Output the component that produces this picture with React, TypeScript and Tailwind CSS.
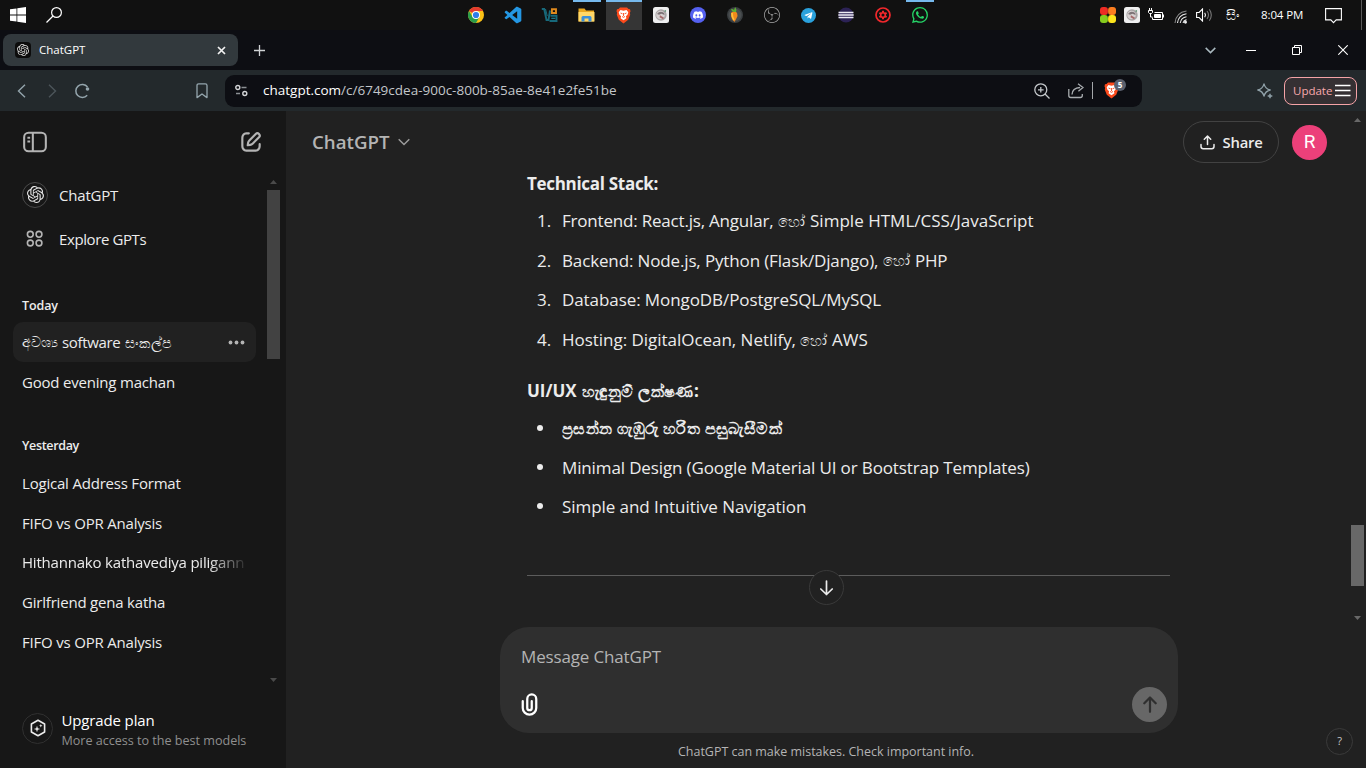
import React from "react";
import { SiOpenai, SiObsstudio, SiDiscord, SiWhatsapp } from "react-icons/si";
import { FaTelegramPlane } from "react-icons/fa";
import { BiLogoVisualStudio } from "react-icons/bi";

function Chrome() {
  return (
    <svg width="16" height="16" viewBox="0 0 48 48">
      <circle cx="24" cy="24" r="24" fill="#fbc116" />
      <path d="M24 24 L3.2 12 A24 24 0 0 1 44.8 12 L24 12Z" fill="#e33b2e" />
      <path d="M3.2 12 L13.6 30 L24 36 L24 48 A24 24 0 0 1 3.2 12Z" fill="#2a9d4a" />
      <path d="M24 48 L34.4 30 L24 34 L13.6 30Z" fill="#2a9d4a" />
      <circle cx="24" cy="24" r="12" fill="#fff" />
      <circle cx="24" cy="24" r="9.3" fill="#2f7de8" />
    </svg>
  );
}

function VBox() {
  return (
    <svg width="17" height="16" viewBox="0 0 17 16" fill="none">
      <path d="M.8 2h2.400l2.300 11h2L9 3.500" stroke="#17697a" strokeWidth="1.900" />
      <path d="M4.500 2l1.800 7" stroke="#1d8296" strokeWidth=".8" />
      <path d="M9.500 8.700h6v5.300h-7" stroke="#17697a" strokeWidth="1.900" />
      <path d="M10.300 11.300h4" stroke="#1d8296" strokeWidth="1.200" />
      <path d="M10.900 6V2.300h4.100v3.700z" stroke="#e08a1e" strokeWidth="1.900" />
    </svg>
  );
}

function Folder() {
  return (
    <svg width="17" height="16" viewBox="0 0 17 16">
      <path d="M0.5 1.5h6l1.500 2h8v11h-15.500z" fill="#e9a820" />
      <path d="M0.500 5h16v9.500h-16z" fill="#ffd767" />
      <path d="M3.500 14.500v-4q0-1.500 1.500-1.500h7q1.500 0 1.500 1.500v4h-3v-3h-4v3z" fill="#3a8fd8" />
    </svg>
  );
}

function BraveLion() {
  return (
    <svg width="15" height="17" viewBox="0 0 15 17">
      <path d="M4 .5h7l1.500 1.500 1.500.3.500 2-.6 1.500.3 2-2 5L7.500 16.500 2.800 12.800l-2-5 .3-2L.5 4.300l.5-2L2.500 2z" fill="#fb4a1c" />
      <path d="M4.500 3l3 .7 3-.7 1.800 2.200-.8 2.500-1.600 1.500.5 2-2.900 2-2.900-2 .5-2L3.500 7.700 2.700 5.200z" fill="#fff" />
      <path d="M4.500 6l2 .8M10.500 6l-2 .8M7.500 6v3M6 9.500l1.500.8L9 9.500" stroke="#fb4a1c" strokeWidth=".9" fill="none" />
    </svg>
  );
}

function Cat() {
  return (
    <svg width="16" height="16" viewBox="0 0 16 16">
      <rect width="16" height="16" rx="2.500" fill="#efefef" />
      <circle cx="8" cy="8" r="5.700" fill="#a9a6a6" />
      <circle cx="7.500" cy="8" r="4.300" fill="#d6d0d0" />
      <path d="M4 7q3-4 7-1l.5 2-3-1.300-2.500 1z" fill="#7d7476" />
      <path d="M7 8.300l4 2.500-1 1.500-3.500-2z" fill="#a56a6a" />
      <circle cx="12.300" cy="4" r=".9" fill="#6f9a80" />
    </svg>
  );
}

function FruityLoops() {
  return (
    <svg width="16" height="16" viewBox="0 0 16 16">
      <circle cx="8" cy="8" r="8" fill="#3a3e40" />
      <circle cx="8" cy="8" r="6.500" fill="#4a4e50" />
      <path d="M4.300 5.500q2.500-2 5.700.3 1.300 3-.6 5.600L7.500 15q-2.900-2.500-3.500-6 0-2.500.3-3.500z" fill="#f28a1c" />
      <path d="M5 6q0 4.500 2 7" stroke="#ffc23e" strokeWidth="1.700" fill="none" />
      <path d="M7 5q-2.500-.7-3-3 2 0 3.200 1.400Q7 1.500 8.500.300q1.200 2.200.5 4.700z" fill="#5cb531" />
    </svg>
  );
}

function Eclipse() {
  return (
    <svg width="16" height="16" viewBox="0 0 16 16">
      <circle cx="8" cy="8" r="7.500" fill="#2c2255" />
      <path d="M.5 5.500h15M.3 8h15.400M.5 10.500h15" stroke="#eceaf5" strokeWidth="1.300" />
    </svg>
  );
}

function RedCog() {
  return (
    <svg width="16" height="16" viewBox="0 0 16 16" fill="none" stroke="#f3282c">
      <circle cx="8" cy="8" r="7" strokeWidth="1.700" />
      <path d="M8 3.800v2M8 10.200v2M4.400 5.900l1.700 1M9.900 9.100l1.700 1M4.400 10.100l1.700-1M9.900 6.900l1.700-1" strokeWidth="2" />
      <circle cx="8" cy="8" r="2.300" strokeWidth="1.600" />
    </svg>
  );
}

type AppCell = { icon: React.ReactNode; open?: boolean; active?: boolean };

const apps: AppCell[] = [
  { icon: <Chrome /> },
  { icon: <BiLogoVisualStudio size={20} color="#2497e3" /> },
  { icon: <VBox /> },
  { icon: <Folder />, open: true },
  { icon: <BraveLion />, active: true },
  { icon: <Cat /> },
  { icon: <span className="flex size-4 items-center justify-center rounded-full bg-[#5561f0]"><SiDiscord size={10} color="#fff" /></span> },
  { icon: <FruityLoops /> },
  { icon: <SiObsstudio size={16} color="#a9a9a9" /> },
  { icon: <span className="flex size-[15px] items-center justify-center rounded-full bg-[#2aa1dc]"><FaTelegramPlane size={9} color="#fff" /></span> },
  { icon: <Eclipse /> },
  { icon: <RedCog /> },
  { icon: <SiWhatsapp size={16} color="#25d366" />, open: true },
];

function Taskbar() {
  return (
    <div className="flex h-[30px] items-center bg-[#111111] text-white">
      <svg className="ml-[10px]" width="16" height="16" viewBox="0 0 16 16" fill="#fff">
        <path d="M0 2.300 6.500 1.400V7.500H0zM7.300 1.300 16 0v7.500H7.300zM0 8.400h6.500v6.200L0 13.700zM7.300 8.400H16V16l-8.700-1.300z" />
      </svg>
      <svg className="ml-5" width="16" height="16" viewBox="0 0 16 16" fill="none" stroke="#fff" strokeWidth="1.200">
        <circle cx="10.500" cy="5.500" r="4.900" />
        <path d="M7 9 .5 15.500" />
      </svg>
      <div className="ml-[395px] flex h-full">
        {apps.map((a, i) => (
          <div key={i} className="flex h-full w-[37px] justify-center">
            <div className={a.active ? "flex h-full w-9 flex-col items-center bg-[#353535]" : "flex h-full w-7 flex-col items-center"}>
              <div className={a.active || a.open ? "h-[2px] w-full bg-[#76b9ed]" : "h-[2px] w-full"} />
              <div className="flex h-[26px] items-center">{a.icon}</div>
            </div>
          </div>
        ))}
      </div>
      <div className="ml-[162px] flex h-full items-center">
        <svg width="16" height="16" viewBox="0 0 16 16">
          <rect width="7.900" height="7.900" rx="3" fill="#ee2b24" />
          <rect x="8.100" width="7.900" height="7.900" rx="3" fill="#fb7d1f" />
          <rect y="8.100" width="7.900" height="7.900" rx="3" fill="#86cc1d" />
          <rect x="8.100" y="8.100" width="7.900" height="7.900" rx="3" fill="#fde51c" />
        </svg>
        <span className="ml-2"><Cat /></span>
        <svg className="ml-2" width="16" height="14" viewBox="0 0 16 14" fill="none" stroke="#fff">
          <path d="M4.500 9.500v2h10v-7h-8" />
          <path d="M6.500 6.500h6v3h-6z" fill="#fff" />
          <path d="M15.500 6.500v3M1.500 0v2.500M3.500 0v2.500M.5 2.500h4v2l-1 1h-2l-1-1zM2.500 5.500v3.500h2" />
        </svg>
        <svg className="ml-[10px] mt-[3px]" width="16" height="14" viewBox="0 0 16 14" fill="none" stroke="#e8e8e8" strokeWidth="1.100">
          <path d="M1 13Q2 2.500 12.500 1" stroke="#8a8a8a" />
          <path d="M3.500 13Q4.500 5 12.500 3.800M6.200 13q1-5.500 6.300-6.300M9 13q.5-2.500 3.500-3.400" />
          <circle cx="11.500" cy="12.200" r=".9" fill="#fff" />
        </svg>
        <svg className="ml-[6px]" width="17" height="14" viewBox="0 0 17 14" fill="none" stroke="#fff" strokeWidth="1.100">
          <path d="M.6 4.500h2.500L6.500 1v12L3.100 9.500H.6z" />
          <path d="M8.700 4.800q1.600 2.200 0 4.400" />
          <path d="M11 3q3 4 0 8M13.300 1.200q4 5.800 0 11.600" stroke="#777" />
        </svg>
        <span className="ml-[13px] w-[15px] whitespace-nowrap text-[13.500px]">සිං</span>
        <span className="ml-5 whitespace-nowrap text-[11.500px] tracking-[-0.100px]">8:04 PM</span>
        <svg className="ml-[22px]" width="17" height="17" viewBox="0 0 17 17" fill="none" stroke="#fff" strokeWidth="1.100">
          <path d="M.6 1.600h15.800v11.300h-5.200l-2.700 2.700-2.700-2.700H.6z" />
        </svg>
        <div className="ml-[19px] h-full w-px bg-[#5a5a5a]" />
      </div>
    </div>
  );
}

function TabStrip() {
  return (
    <div className="flex h-10 items-center bg-[#0d0e13]">
      <div className="ml-[3px] flex h-8 w-[235px] items-center rounded-lg bg-[#32393d]">
        <span className="ml-3 flex size-4 items-center justify-center rounded bg-[#0c0c0c]"><SiOpenai size={12} color="#dcdcdc" /></span>
        <span className="ml-2 text-[11.500px] text-white">ChatGPT</span>
        <svg className="ml-auto mr-3" width="9" height="9" viewBox="0 0 9 9" stroke="#f2f2f2" strokeWidth="1.700"><path d="M1 1l7 7M8 1L1 8" /></svg>
      </div>
      <svg className="ml-4" width="11" height="11" viewBox="0 0 11 11" stroke="#cfd2d4" strokeWidth="1.300"><path d="M5.500 0v11M0 5.500h11" /></svg>
      <div className="ml-auto flex items-center">
        <svg width="11" height="7" viewBox="0 0 11 7" fill="none" stroke="#a9b8bf" strokeWidth="1.500"><path d="M.7.900 5.500 5.600 10.300.9" /></svg>
        <div className="ml-[30px] h-px w-[10px] bg-white" />
        <svg className="ml-9" width="10" height="10" viewBox="0 0 10 10" fill="none" stroke="#fff"><path d="M.5 2.500h7v7h-7zM2.500 2.500v-2h7v7h-2" /></svg>
        <svg className="ml-9 mr-[18px]" width="10" height="10" viewBox="0 0 10 10" stroke="#fff" strokeWidth="1.100"><path d="M.3.3l9.400 9.400M9.700.3.300 9.700" /></svg>
      </div>
    </div>
  );
}

function Toolbar() {
  return (
    <div className="flex h-[41px] items-center bg-[#23292c]">
      <svg className="ml-[17px]" width="9" height="14" viewBox="0 0 9 14" fill="none" stroke="#94a5ad" strokeWidth="1.400"><path d="M8 .8 1.500 7 8 13.200" /></svg>
      <svg className="ml-[22px]" width="9" height="14" viewBox="0 0 9 14" fill="none" stroke="#4c555a" strokeWidth="1.400"><path d="M1 .8 7.500 7 1 13.200" /></svg>
      <svg className="ml-[17px]" width="17" height="16" viewBox="0 0 17 16" fill="none" stroke="#94a5ad" strokeWidth="1.500">
        <path d="M13.200 12.300A6.500 6.500 0 1 1 13.500 4" />
        <circle cx="13.500" cy="6" r="1.800" fill="#94a5ad" stroke="none" />
      </svg>
      <svg className="ml-[105px]" width="12" height="16" viewBox="0 0 12 16" fill="none" stroke="#94a5ad" strokeWidth="1.300"><path d="M1 14.600V2.500Q1 .8 2.700.8h6.600Q11 .8 11 2.500v12.100L6 11z" strokeLinejoin="round" /></svg>
      <div className="ml-[17px] flex h-8 w-[917px] items-center rounded-[9px] bg-[#0d0e13]">
        <svg className="ml-[10px]" width="13" height="13" viewBox="0 0 13 13" fill="none" stroke="#d4d6d8" strokeWidth="1.400">
          <circle cx="2.800" cy="3.500" r="2" /><path d="M6.500 3.500h5M1 9.500h4" stroke="#8c9094" /><circle cx="9.800" cy="9.500" r="2" />
        </svg>
        <span className="ml-[15px] whitespace-nowrap text-[13.500px] text-[#c3c6ca]"><span className="text-white">chatgpt.com</span>/c/6749cdea-900c-800b-85ae-8e41e2fe51be</span>
        <svg className="ml-auto" width="16" height="16" viewBox="0 0 16 16" fill="none" stroke="#c4c8cb" strokeWidth="1.300"><circle cx="6.800" cy="6.800" r="6" /><path d="M6.800 4v5.600M4 6.800h5.600M11 11l4.500 4.500" /></svg>
        <svg className="ml-[18px]" width="16" height="16" viewBox="0 0 16 16" fill="none" stroke="#a9adb0" strokeWidth="1.300"><path d="M.8 6v6.500q0 2 2 2h9.500q2 0 2-2V11M4 11.500q.3-6.500 8-7M10 .8 15 4.500l-4.600 3.800" /></svg>
        <div className="ml-2 h-[17px] w-px bg-[#a4a7aa]" />
        <div className="relative ml-[11px] mr-4 flex h-5 w-[22px] items-center">
          <BraveLion />
          <span className="absolute -top-[2px] right-0 flex size-3 items-center justify-center rounded-full bg-[#5b616e] text-[8px] font-bold text-white">5</span>
        </div>
      </div>
      <svg className="ml-auto" width="16" height="16" viewBox="0 0 16 16" fill="none" stroke="#8fa0a8" strokeWidth="1.300" strokeLinejoin="round">
        <path d="M7 .8Q8.200 5.800 13.200 7 8.200 8.200 7 13.200 5.800 8.200.8 7 5.800 5.800 7 .8z" /><path d="M13 10.700v4.600M10.700 13h4.600" strokeWidth="1.500" />
      </svg>
      <div className="ml-[11px] mr-[9px] flex h-7 w-[73px] items-center rounded-lg border border-[#f5a3a7] bg-[#353033]">
        <span className="ml-2 text-[11.500px] text-[#f8a9ad]">Update</span>
        <svg className="ml-auto mr-[5px]" width="16" height="13" viewBox="0 0 16 13" stroke="#fff" strokeWidth="1.300"><path d="M0 1.500h15.500M0 6.500h15.500M0 11.500h15.500" /></svg>
      </div>
    </div>
  );
}

function ChatItem({ children }: { children: React.ReactNode }) {
  return <div className="flex h-[39.600px] shrink-0 items-center whitespace-nowrap pl-[9px]">{children}</div>;
}

function Sidebar() {
  return (
    <aside className="flex w-[286px] flex-col bg-[#171717] text-[15px] tracking-[-0.200px] text-[#ececec]">
      <div className="mt-[18px] flex h-[26px] items-center justify-between pl-[22px] pr-[22px]">
        <svg width="26" height="26" viewBox="0 0 24 24" fill="none" stroke="#b4b4b4" strokeWidth="1.900"><rect x="2" y="3.500" width="20" height="17" rx="4" /><path d="M10 3.500v17" /><path d="M5 8h2.500M5 11.500h2.500" /></svg>
        <svg width="26" height="26" viewBox="0 0 24 24" fill="#b4b4b4"><path d="M15.673 3.913a3.121 3.121 0 0 1 4.414 4.414l-5.937 5.937a5 5 0 0 1-2.829 1.415l-2.180.311a1 1 0 0 1-1.131-1.131l.311-2.180a5 5 0 0 1 1.415-2.829zm3 1.414a1.121 1.121 0 0 0-1.586 0l-5.937 5.937a3 3 0 0 0-.849 1.697l-.123.861.861-.123a3 3 0 0 0 1.697-.849l5.937-5.937a1.121 1.121 0 0 0 0-1.586M11 3.999A1 1 0 0 1 10 5c-.998 0-1.702.008-2.253.06-.54.052-.862.141-1.109.267a3 3 0 0 0-1.311 1.311c-.134.263-.226.611-.276 1.216C5.001 8.471 5 9.263 5 10.400v3.200c0 1.137.001 1.929.051 2.546.050.605.142.953.276 1.216a3 3 0 0 0 1.311 1.311c.263.134.611.226 1.216.276.617.050 1.409.051 2.546.051h3.200c1.137 0 1.929-.001 2.546-.051.605-.050.953-.142 1.216-.276a3 3 0 0 0 1.311-1.311c.126-.247.215-.569.266-1.108.053-.552.060-1.256.061-2.255a1 1 0 1 1 2 .002c-.001.978-.007 1.780-.070 2.442-.064.673-.192 1.271-.475 1.827a5 5 0 0 1-2.185 2.185c-.592.302-1.232.428-1.961.487-.708.058-1.582.058-2.666.058h-3.286c-1.084 0-1.958 0-2.666-.058-.729-.060-1.369-.185-1.961-.487a5 5 0 0 1-2.185-2.185c-.302-.592-.428-1.232-.487-1.961C3 15.600 3 14.727 3 13.643v-3.286c0-1.084 0-1.958.058-2.666.060-.729.185-1.369.487-1.961A5 5 0 0 1 5.730 3.545c.556-.283 1.154-.411 1.827-.475C8.219 3.007 9.021 3.001 10 3a1 1 0 0 1 1 .999" /></svg>
      </div>
      <div className="mt-5 flex h-[515px]">
        <div className="ml-[13px] flex w-[243px] flex-col overflow-hidden">
          <div className="flex h-11 shrink-0 items-center pb-[5px] pl-[9px]">
            <span className="flex size-[26px] items-center justify-center rounded-full border border-[#4a4a4a]"><SiOpenai size={17} color="#e8e8e8" /></span>
            <span className="ml-[11px] mt-[2px]">ChatGPT</span>
          </div>
          <div className="flex h-11 shrink-0 items-center pb-[5px] pl-[13px]">
            <svg width="18" height="18" viewBox="0 0 18 18" fill="none" stroke="#b4b4b4" strokeWidth="1.600"><circle cx="4.300" cy="4.300" r="2.900" /><circle cx="13" cy="4.300" r="2.900" /><circle cx="4.300" cy="13" r="2.900" /><circle cx="13" cy="13" r="2.900" /></svg>
            <span className="ml-[15px] mt-px tracking-[-0.400px]">Explore GPTs</span>
          </div>
          <h3 className="mt-[27px] flex h-8 shrink-0 items-center pl-[9px] text-[12.500px] font-semibold tracking-[-0.100px]">Today</h3>
          <div className="flex h-10 shrink-0 items-center whitespace-nowrap rounded-[10px] bg-[#212121] pl-[9px] pr-[11px]">
            <span className="w-9 text-[13.500px] tracking-normal">අවශ්‍ය</span><span className="ml-1 w-[59px] tracking-[-0.350px]">software</span><span className="ml-1 text-[14px] tracking-[0.400px]">සංකල්ප</span>
            <svg className="ml-auto" width="17" height="5" viewBox="0 0 17 5" fill="#b4b4b4"><circle cx="2.500" cy="2.500" r="1.900" /><circle cx="8.500" cy="2.500" r="1.900" /><circle cx="14.500" cy="2.500" r="1.900" /></svg>
          </div>
          <ChatItem>Good evening machan</ChatItem>
          <h3 className="mt-7 flex h-[34px] shrink-0 items-center pl-[9px] text-[12.500px] font-semibold tracking-[-0.330px]">Yesterday</h3>
          <ChatItem>Logical Address Format</ChatItem>
          <ChatItem>FIFO vs OPR Analysis</ChatItem>
          <div className="w-[233px] shrink-0 overflow-hidden [mask-image:linear-gradient(to_right,#000_195px,transparent_236px)]"><ChatItem>Hithannako kathavediya piligann</ChatItem></div>
          <ChatItem>Girlfriend gena katha</ChatItem>
          <ChatItem>FIFO vs OPR Analysis</ChatItem>
        </div>
        <div className="ml-[11px] flex w-[13px] flex-col items-center">
          <svg className="mt-[5px]" width="7" height="4" viewBox="0 0 7 4" fill="#4a4a4a"><path d="M0 4 3.500 0 7 4z" /></svg>
          <div className="mt-[6px] h-[169px] w-[13px] bg-[#424242]" />
          <svg className="mb-[8px] mt-auto" width="7" height="4" viewBox="0 0 7 4" fill="#4a4a4a"><path d="M0 0l3.500 4L7 0z" /></svg>
        </div>
      </div>
      <div className="mt-5 flex items-center pl-[22px]">
        <span className="-mt-[5px] flex size-[31px] items-center justify-center rounded-full border border-[#303030]">
          <svg width="16" height="18" viewBox="0 0 16 18" fill="none" stroke="#ececec" strokeWidth="1.600"><path d="M8 1.300 14.600 5v8L8 16.700 1.400 13V5z" strokeLinejoin="round" /><path d="M7 6.800l.8 2.400 2.400.8-2.400.8L7 13.200l-.8-2.400-2.400-.8 2.400-.8z" fill="#ececec" stroke="none" /><path d="M10.800 5l.5 1.200 1.200.5-1.200.5-.5 1.200-.5-1.200-1.200-.5 1.200-.5z" fill="#ececec" stroke="none" /></svg>
        </span>
        <div className="ml-[8.500px] flex flex-col items-start">
          <span className="h-5 leading-5 tracking-[-0.140px] text-white">Upgrade plan</span>
          <span className="mt-px h-5 text-[12.600px] leading-5 tracking-[-0.020px] text-[#8f8f8f]">More access to the best models</span>
        </div>
      </div>
    </aside>
  );
}

function Numbered({ n, children }: { n: number; children: React.ReactNode }) {
  return (
    <li className="flex h-[39.700px] items-center whitespace-nowrap">
      <span className="w-[35px] pl-[10px]">{n}.</span>
      {children}
    </li>
  );
}

function Bullet({ children }: { children: React.ReactNode }) {
  return (
    <li className="flex h-[39px] items-center whitespace-nowrap">
      <span className="ml-[10px] mr-[19px] size-[6px] rounded-full bg-[#ececec]" />
      {children}
    </li>
  );
}

function Hoo() {
  return <span className="mx-1 w-7 text-[15px]">හෝ</span>;
}

function Chat() {
  return (
    <main className="relative flex flex-1 flex-col bg-[#212121] text-[17px] text-[#ececec]">
      <header className="flex h-[62px] shrink-0 items-center">
        <span className="ml-[26px] text-[18.700px] font-semibold text-[#b4b4b4]">ChatGPT</span>
        <svg className="ml-2" width="12" height="8" viewBox="0 0 12 8" fill="none" stroke="#9b9b9b" strokeWidth="1.500"><path d="M.7 1.200 6 6.500l5.300-5.300" /></svg>
        <div className="ml-auto flex h-[42px] w-24 items-center rounded-full border border-[#424242] pl-4">
          <svg width="15" height="15" viewBox="0 0 15 15" fill="none" stroke="#ececec" strokeWidth="1.500" strokeLinecap="round" strokeLinejoin="round"><path d="M1 9.500v2q0 2.200 2.200 2.200h8.600q2.200 0 2.200-2.200v-2M7.500 9.500V1.200M4.300 4.200 7.500 1l3.200 3.200" /></svg>
          <span className="ml-[7.500px] text-[14.800px] font-semibold tracking-[-0.200px]">Share</span>
        </div>
        <span className="ml-[13px] mr-[39px] flex size-[35px] items-center justify-center rounded-full bg-[#ec407a] font-[Roboto] text-[19px] text-white">R</span>
      </header>
      <div className="ml-[241px] flex w-[643px] flex-col">
        <h2 className="flex h-[22px] items-center font-bold tracking-[-0.300px]">Technical Stack:</h2>
        <ol className="mt-[6px]">
          <Numbered n={1}><span className="w-[212px] tracking-[-0.200px]">Frontend: React.js, Angular,</span><Hoo /><span className="tracking-[0.020px]">Simple HTML/CSS/JavaScript</span></Numbered>
          <Numbered n={2}><span className="w-[317px] tracking-[-0.140px]">Backend: Node.js, Python (Flask/Django),</span><Hoo /><span className="tracking-[-0.200px]">PHP</span></Numbered>
          <Numbered n={3}><span className="tracking-[-0.080px]">Database: MongoDB/PostgreSQL/MySQL</span></Numbered>
          <Numbered n={4}><span className="w-[234px] tracking-[-0.030px]">Hosting: DigitalOcean, Netlify,</span><Hoo /><span>AWS</span></Numbered>
        </ol>
        <h2 className="mt-[19px] flex h-6 items-center whitespace-nowrap font-bold"><span className="w-[51px]">UI/UX</span><span className="ml-1 w-28 text-[16px] tracking-[0.400px]">හැඳුනුම් ලක්ෂණ</span>:</h2>
        <ul className="mt-[6px]">
          <Bullet><b className="text-[16px] tracking-[0.400px]">ප්‍රසන්න ගැඹුරු හරිත පසුබැසීමක්</b></Bullet>
          <Bullet><span className="tracking-[-0.130px]">Minimal Design (Google Material UI or Bootstrap Templates)</span></Bullet>
          <Bullet><span className="tracking-[-0.060px]">Simple and Intuitive Navigation</span></Bullet>
        </ul>
        <div className="mt-[49px] h-px bg-[#5c5c5c]" />
      </div>
      <button className="absolute left-[523px] top-[459px] flex size-[35px] items-center justify-center rounded-full border border-[#3a3a3a] bg-[#212121]">
        <svg width="14" height="16" viewBox="0 0 14 16" fill="none" stroke="#ececec" strokeWidth="1.700" strokeLinecap="round" strokeLinejoin="round"><path d="M6.500 1v13.500M.8 9l5.700 5.500L12.200 9" /></svg>
      </button>
      <div className="ml-[214px] mt-[51px] flex h-[106px] w-[678px] flex-col rounded-[29px] bg-[#2f2f2f] pl-[21px] pr-[11px]">
        <span className="mt-[18px] h-6 self-start leading-6 tracking-[-0.150px] text-[#b4b4b4]">Message ChatGPT</span>
        <div className="mt-[18px] flex h-[35px] items-center justify-between">
          <svg className="-ml-[5px]" width="27" height="27" viewBox="0 0 24 24" fill="#fff"><path d="M9 7a5 5 0 0 1 10 0v8a7 7 0 1 1-14 0V9a1 1 0 0 1 2 0v6a5 5 0 0 0 10 0V7a3 3 0 1 0-6 0v8a1 1 0 1 0 2 0V9a1 1 0 1 1 2 0v6a3 3 0 1 1-6 0z" /></svg>
          <span className="flex size-[35px] items-center justify-center rounded-full bg-[#676767]">
            <svg width="14" height="17" viewBox="0 0 14 17" fill="none" stroke="#2f2f2f" strokeWidth="2.200" strokeLinecap="round" strokeLinejoin="round"><path d="M7 15.800V1.500M1.300 7.300 7 1.500l5.700 5.800" /></svg>
          </span>
        </div>
      </div>
      <p className="ml-[392px] mt-[9px] h-5 text-[12.500px] leading-5 tracking-[-0.020px] text-[#b4b4b4]">ChatGPT can make mistakes. Check important info.</p>
      <div className="absolute right-0 top-0 flex h-[514px] w-[17px] flex-col items-center">
        <svg className="mt-[7px]" width="7" height="4" viewBox="0 0 7 4" fill="#686868"><path d="M0 4 3.500 0 7 4z" /></svg>
        <div className="mt-[403px] h-[61px] w-[13px] bg-[#686868]" />
        <svg className="mt-[30px]" width="7" height="4" viewBox="0 0 7 4" fill="#686868"><path d="M0 0l3.500 4L7 0z" /></svg>
      </div>
      <span className="absolute bottom-[13px] right-[13px] flex size-[27px] items-center justify-center rounded-full border border-[#3a3a3a] text-[11px] text-[#c8c8c8]">?</span>
    </main>
  );
}

export default function App() {
  return (
    <div className="flex h-[768px] w-[1366px] flex-col overflow-hidden bg-[#212121] font-['Open_Sans','Noto_Sans',sans-serif]">
      <Taskbar />
      <TabStrip />
      <Toolbar />
      <div className="flex flex-1">
        <Sidebar />
        <Chat />
      </div>
    </div>
  );
}
